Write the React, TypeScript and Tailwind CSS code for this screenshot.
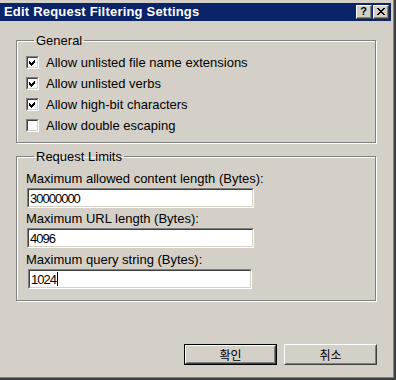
import React from 'react'

const font = { fontFamily: '"Liberation Sans", Arial, sans-serif' }

function CheckBox({ checked }: { checked: boolean }) {
  return (
    <span className="box-border block h-[13px] w-[13px] border border-t-[#808080] border-l-[#808080] border-r-white border-b-white">
      <span className="box-border flex h-[11px] w-[11px] items-center justify-center border border-t-[#404040] border-l-[#404040] border-r-[#d4d0c8] border-b-[#d4d0c8] bg-white">
        {checked && (
          <svg width="9" height="9" viewBox="0 0 9 9" shapeRendering="crispEdges">
            <path d="M1 3h1v1h1v1h1v-1h1v-1h1v-1h1v3h-1v1h-1v1h-1v1h-1v-1h-1v-1h-1z" fill="#000" />
          </svg>
        )}
      </span>
    </span>
  )
}

function CheckRow({ checked, label }: { checked: boolean; label: string }) {
  return (
    <div className="flex h-[21px] items-center gap-[7px]">
      <CheckBox checked={checked} />
      <span className="text-[13px] leading-[15px] text-black">{label}</span>
    </div>
  )
}

function TextBox({ value, caret, className }: { value: string; caret?: boolean; className: string }) {
  return (
    <div className={`box-border h-[20px] border border-t-[#808080] border-l-[#808080] border-r-white border-b-white ${className}`}>
      <div className="box-border flex h-[18px] items-center border border-t-[#404040] border-l-[#404040] border-r-[#d4d0c8] border-b-[#d4d0c8] bg-white pl-[1px]">
        <span className="text-[13px] leading-[15px] tracking-[-1px] text-black">{value}</span>
        {caret && <span className="ml-[1px] h-[14px] w-[1px] bg-black" />}
      </div>
    </div>
  )
}

function Btn({ label, isDefault }: { label: string; isDefault?: boolean }) {
  return (
    <div className={`box-border h-[21px] w-[93px] ${isDefault ? 'border border-black' : ''}`}>
      <div className="box-border h-full border border-t-white border-l-white border-r-[#404040] border-b-[#404040]">
        <div className="box-border flex h-full items-center justify-center border border-t-[#d4d0c8] border-l-[#d4d0c8] border-r-[#808080] border-b-[#808080]">
          <span
            className="text-[12px] leading-[14px] text-black"
            style={{ fontFamily: '"Noto Sans CJK KR", sans-serif' }}
          >
            {label}
          </span>
        </div>
      </div>
    </div>
  )
}

function TitleBtn({ children }: { children: React.ReactNode }) {
  return (
    <div className="box-border h-[14px] w-[16px] border border-t-white border-l-white border-r-[#404040] border-b-[#404040] bg-[#d4d0c8]">
      <div className="flex h-full items-center justify-center border-r border-b border-[#808080]">{children}</div>
    </div>
  )
}

export default function App() {
  return (
    <div className="box-border h-[380px] w-[396px] overflow-hidden border-r-2 border-b-2 border-[#404040] bg-[#d4d0c8]" style={font}>
      <div className="box-border h-full border-r border-b border-[#808080] pt-[3px]">
        {/* title bar */}
        <div className="mr-[2px] flex h-[18px] items-center justify-between bg-[#0a246a] pl-[4px] pr-[2px]">
          <span className="text-[13px] font-bold leading-[16px] tracking-[0.2px] text-white">
            Edit Request Filtering Settings
          </span>
          <div className="flex gap-[1px]">
            <TitleBtn>
              <span className="text-[11px] font-bold leading-[11px] text-black">?</span>
            </TitleBtn>
            <TitleBtn>
              <svg width="8" height="7" viewBox="0 0 8 7" shapeRendering="crispEdges">
                <path d="M0 0h2v1h1v1h2v-1h1v-1h2v1h-1v1h-1v1h-1v1h1v1h1v1h1v1h-2v-1h-1v-1h-2v1h-1v1h-2v-1h1v-1h1v-1h1v-1h-1v-1h-1v-1h-1z" fill="#000" />
              </svg>
            </TitleBtn>
          </div>
        </div>

        {/* General */}
        <fieldset className="ml-[16px] mt-[12px] w-[360px] border border-[#808080] pb-[6px] pl-[9px] pt-[4px] shadow-[inset_1px_1px_0_#fff,1px_1px_0_#fff]">
          <legend className="ml-[8px] px-[2px] text-[13px] leading-[15px] text-black">General</legend>
          <CheckRow checked label="Allow unlisted file name extensions" />
          <CheckRow checked label="Allow unlisted verbs" />
          <CheckRow checked label="Allow high-bit characters" />
          <CheckRow checked={false} label="Allow double escaping" />
        </fieldset>

        {/* Request Limits */}
        <fieldset className="ml-[16px] mt-[6px] w-[360px] border border-[#808080] pb-[11px] pl-[9px] pt-[6px] shadow-[inset_1px_1px_0_#fff,1px_1px_0_#fff]">
          <legend className="ml-[8px] px-[2px] text-[13px] leading-[15px] text-black">Request Limits</legend>
          <div className="flex flex-col">
            <span className="text-[13px] leading-[18px] text-black">Maximum allowed content length (Bytes):</span>
            <TextBox value="30000000" className="ml-[1px] w-[227px]" />
            <span className="mt-[2px] text-[13px] leading-[18px] text-black">Maximum URL length (Bytes):</span>
            <TextBox value="4096" className="ml-[1px] w-[227px]" />
            <span className="mt-[3px] text-[13px] leading-[18px] text-black">Maximum query string (Bytes):</span>
            <TextBox value="1024" caret className="ml-[2px] w-[224px]" />
          </div>
        </fieldset>

        <div className="ml-[184px] mt-[43px] flex gap-[7px]">
          <Btn label="확인" isDefault />
          <Btn label="취소" />
        </div>
      </div>
    </div>
  )
}
